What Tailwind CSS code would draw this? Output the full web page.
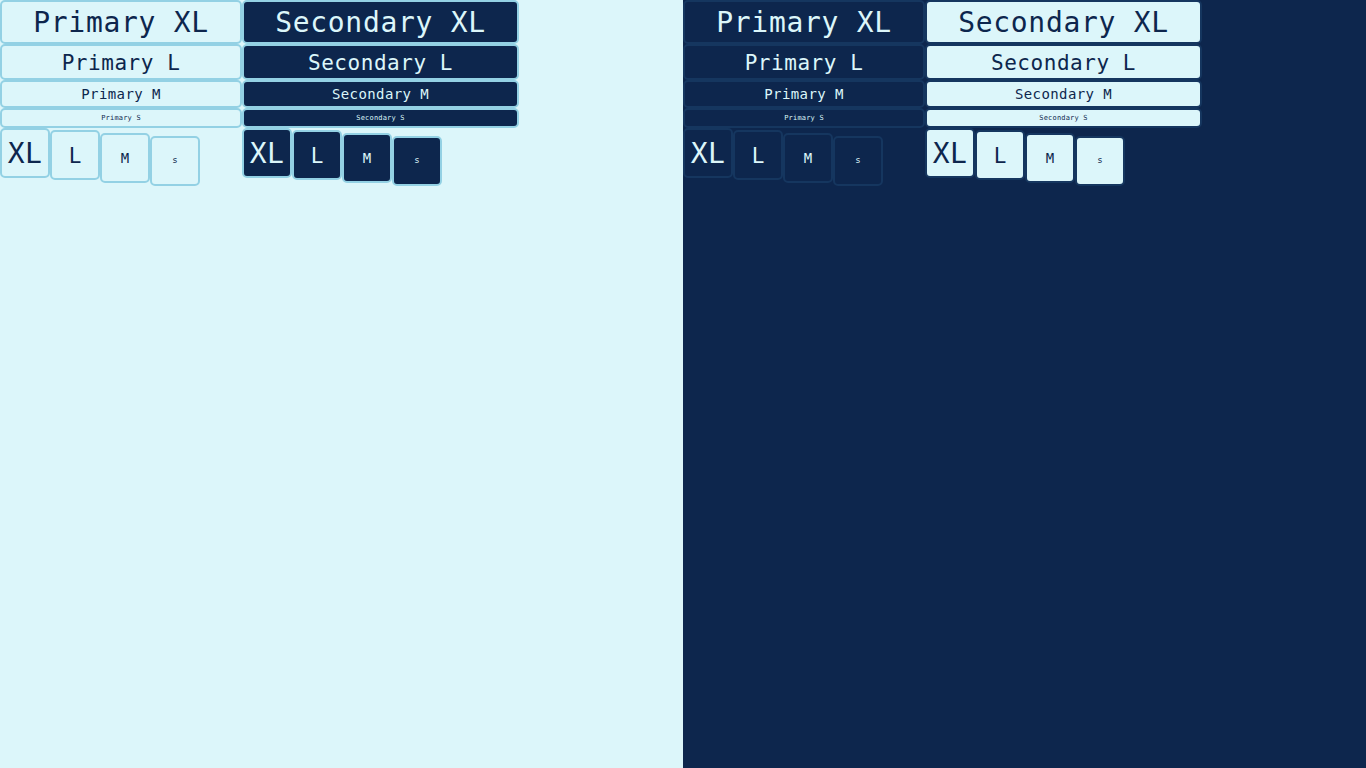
<!DOCTYPE html>
<html lang="en">
<head>
<meta charset="utf-8">
<title>Buttons</title>
<script src="https://cdn.jsdelivr.net/npm/@tailwindcss/browser@4"></script>
</head>
<body class="h-screen overflow-hidden font-[Consolas,'DejaVu_Sans_Mono',monospace]">
<main class="grid grid-cols-2 h-full">
  <section class="bg-[#dcf6fa] text-[#0d264d] flex items-start">
    <div class="w-[242px] flex flex-col [&_button]:border-[#93d1e4] [&_button]:border-2 [&_button]:rounded-[5px] [&_button]:whitespace-nowrap">
      <button class="h-11 text-[28px] leading-[39px] tracking-[0.7px]">Primary XL</button>
      <button class="h-9 pt-px text-[21px] leading-8 tracking-[0.54px]">Primary L</button>
      <button class="h-7 text-[14px] leading-6 tracking-[0.4px]">Primary M</button>
      <button class="h-5 text-[7px] leading-4 tracking-[0.19px]">Primary S</button>
      <div class="flex items-start [&>button]:size-[50px]">
        <button class="pt-0.5 text-[28px] tracking-[0.4px]">XL</button>
        <button class="mt-0.5 pt-1 text-[21px]">L</button>
        <button class="mt-[5px] text-[14px]">M</button>
        <button class="mt-2 text-[9px]">s</button>
      </div>
    </div>
    <div class="w-[277px] flex flex-col text-[#dcf6fa] [&_button]:bg-[#0d264d] [&_button]:border-[#93d1e4] [&_button]:border-2 [&_button]:rounded-[5px] [&_button]:whitespace-nowrap">
      <button class="h-11 text-[28px] leading-[39px] tracking-[0.7px]">Secondary XL</button>
      <button class="h-9 pt-px text-[21px] leading-8 tracking-[0.54px]">Secondary L</button>
      <button class="h-7 text-[14px] leading-6 tracking-[0.4px]">Secondary M</button>
      <button class="h-5 text-[7px] leading-4 tracking-[0.19px]">Secondary S</button>
      <div class="flex items-start [&>button]:size-[50px]">
        <button class="pt-0.5 text-[28px] tracking-[0.4px]">XL</button>
        <button class="mt-0.5 pt-1 text-[21px]">L</button>
        <button class="mt-[5px] text-[14px]">M</button>
        <button class="mt-2 text-[9px]">s</button>
      </div>
    </div>
  </section>
  <section class="bg-[#0d264d] text-[#dcf6fa] flex items-start">
    <div class="w-[242px] flex flex-col [&_button]:border-[#15365f] [&_button]:border-2 [&_button]:rounded-[5px] [&_button]:whitespace-nowrap">
      <button class="h-11 text-[28px] leading-[39px] tracking-[0.7px]">Primary XL</button>
      <button class="h-9 pt-px text-[21px] leading-8 tracking-[0.54px]">Primary L</button>
      <button class="h-7 text-[14px] leading-6 tracking-[0.4px]">Primary M</button>
      <button class="h-5 text-[7px] leading-4 tracking-[0.19px]">Primary S</button>
      <div class="flex items-start [&>button]:size-[50px]">
        <button class="pt-0.5 text-[28px] tracking-[0.4px]">XL</button>
        <button class="mt-0.5 pt-1 text-[21px]">L</button>
        <button class="mt-[5px] text-[14px]">M</button>
        <button class="mt-2 text-[9px]">s</button>
      </div>
    </div>
    <div class="w-[277px] flex flex-col text-[#0d264d] [&_button]:bg-[#dcf6fa] [&_button]:border-[#15365f] [&_button]:border-2 [&_button]:rounded-[5px] [&_button]:whitespace-nowrap">
      <button class="h-11 text-[28px] leading-[39px] tracking-[0.7px]">Secondary XL</button>
      <button class="h-9 pt-px text-[21px] leading-8 tracking-[0.54px]">Secondary L</button>
      <button class="h-7 text-[14px] leading-6 tracking-[0.4px]">Secondary M</button>
      <button class="h-5 text-[7px] leading-4 tracking-[0.19px]">Secondary S</button>
      <div class="flex items-start [&>button]:size-[50px]">
        <button class="pt-0.5 text-[28px] tracking-[0.4px]">XL</button>
        <button class="mt-0.5 pt-1 text-[21px]">L</button>
        <button class="mt-[5px] text-[14px]">M</button>
        <button class="mt-2 text-[9px]">s</button>
      </div>
    </div>
  </section>
</main>
</body>
</html>
